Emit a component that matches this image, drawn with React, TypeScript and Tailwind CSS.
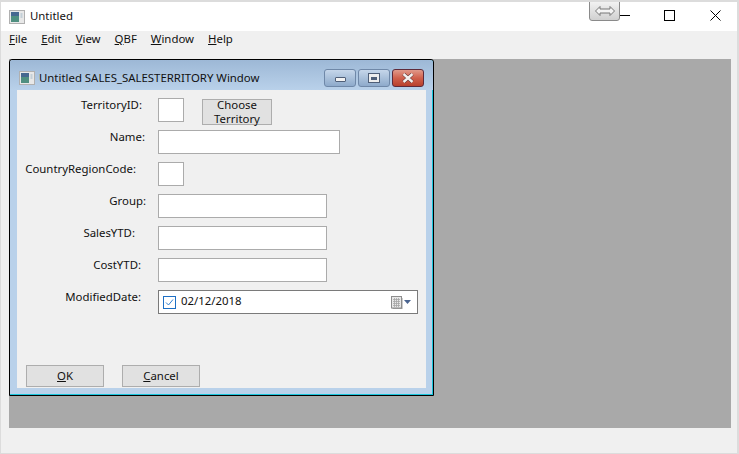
import React from "react";

function AppIcon({ className }: { className?: string }) {
    return (
        <svg className={className} width="16" height="14" viewBox="0 0 16 14">
            <rect x="0.5" y="0.5" width="15" height="13" fill="#e8e8e8" stroke="#b0b0b0" />
            <rect x="2" y="2" width="8" height="10" fill="#4f8f80" />
            <rect x="2" y="2" width="8" height="4" fill="#46688f" />
            <rect x="11.5" y="3" width="2" height="5" fill="#c4d0d8" />
        </svg>
    );
}

const fields = [
    { label: "Name:", pr: "pr-[13px]", w: "w-[182px]" },
    { label: "CountryRegionCode:", pr: "pr-[22px]", w: "w-[26px]" },
    { label: "Group:", pr: "pr-[12px]", w: "w-[169px]" },
    { label: "SalesYTD:", pr: "pr-[23px]", w: "w-[169px]" },
    { label: "CostYTD:", pr: "pr-[17px]", w: "w-[169px]" }
];

function Label({ text, pr }: { text: string; pr: string }) {
    return (
        <div className={`w-[141px] shrink-0 whitespace-nowrap text-right leading-[13px] ${pr}`}>
            {text}
        </div>
    );
}

function CaptionButton({ children, red }: { children: React.ReactNode; red?: boolean }) {
    return (
        <div
            className={
                red
                    ? "flex h-[18px] w-[32px] items-center justify-center rounded-[3px] border border-[#5e2a3a] bg-gradient-to-b from-[#e0998a] via-[#d0604c] to-[#b8402c]"
                    : "flex h-[18px] w-[32px] items-center justify-center rounded-[3px] border border-[#6f88a8] bg-gradient-to-b from-[#c5d6ea] via-[#a9c0da] to-[#8eaacb]"
            }>
            {children}
        </div>
    );
}

export default function App() {
    return (
        <div className="flex h-[454px] w-[739px] flex-col overflow-hidden border-t-2 border-r-2 border-b border-l border-[#dcdcdc] bg-[#f0f0f0] font-['Noto_Sans',sans-serif] text-[11.4px] text-[#111]">
            {/* main title bar */}
            <div className="relative flex h-[29px] shrink-0 items-center bg-white">
                <AppIcon className="ml-[8px] mr-[5px]" />
                <span className="pb-[2px]">Untitled</span>
                <div className="absolute left-[588px] top-[-2px] flex h-[21px] w-[31px] items-center justify-center rounded-b-[3px] border border-[#8a8a8a] bg-gradient-to-b from-[#f4f4f4] to-[#d0d0d0]">
                    <svg width="20" height="10" viewBox="0 0 20 10" fill="#f4f4f4" stroke="#777">
                        <path d="M0.5 5 L5 0.5 V3 H15 V0.5 L19.5 5 L15 9.5 V7 H5 V9.5 Z" />
                    </svg>
                </div>
                <svg className="absolute left-[619px] top-[13px]" width="10" height="2" viewBox="0 0 10 2">
                    <path d="M0 0.5 H10" stroke="#000" />
                </svg>
                <svg className="absolute left-[663px] top-[8px]" width="11" height="11" viewBox="0 0 11 11" fill="none">
                    <rect x="0.5" y="0.5" width="10" height="10" stroke="#000" />
                </svg>
                <svg className="absolute left-[709px] top-[8px]" width="11" height="11" viewBox="0 0 11 11" fill="none">
                    <path d="M0.5 0.5 L10.5 10.5 M10.5 0.5 L0.5 10.5" stroke="#000" />
                </svg>
            </div>

            {/* menu bar */}
            <div className="flex h-[28px] shrink-0 items-start gap-[14px] pl-[8px] leading-[16px]">
                <span><u>F</u>ile</span>
                <span><u>E</u>dit</span>
                <span><u>V</u>iew</span>
                <span><u>Q</u>BF</span>
                <span><u>W</u>indow</span>
                <span><u>H</u>elp</span>
            </div>

            {/* mdi area */}
            <div className="ml-[8px] h-[369px] w-[722px] shrink-0 bg-[#a9a9a9]">
                <div className="flex h-[337px] w-[425px] flex-col rounded-tl-[3px] rounded-tr-[3px] border border-black bg-[#b9d1ea] shadow-[inset_0_-1px_0_#19c5dc,inset_-1px_0_0_#19c5dc]">
                    {/* child window caption */}
                    <div className="flex h-[30px] shrink-0 items-center rounded-t-[3px] bg-gradient-to-b from-[#9db8d6] to-[#b9d1ea] pl-[9px] pr-[9px] pt-[6px]">
                        <AppIcon className="mr-[4px]" />
                        <span className="flex-1 whitespace-nowrap">Untitled SALES_SALESTERRITORY Window</span>
                        <div className="flex gap-[2px]">
                            <CaptionButton>
                                <div className="mt-[2px] h-[5px] w-[11px] rounded-[1px] border border-[#4f5f78] bg-[#f2f2f2]" />
                            </CaptionButton>
                            <CaptionButton>
                                <div className="flex h-[10px] w-[12px] items-center justify-center border border-[#4f5f78] bg-[#eeeeee]">
                                    <div className="h-[3px] w-[6px] bg-[#4f5f78]" />
                                </div>
                            </CaptionButton>
                            <CaptionButton red>
                                <svg width="12" height="10" viewBox="0 0 12 10">
                                    <path d="M1.5 1 L10.5 9 M10.5 1 L1.5 9" stroke="#5a3030" strokeWidth="3.6" />
                                    <path d="M1.5 1 L10.5 9 M10.5 1 L1.5 9" stroke="#f4f0ee" strokeWidth="2.4" />
                                </svg>
                            </CaptionButton>
                        </div>
                    </div>

                    {/* form */}
                    <div className="ml-[7px] mr-[7px] flex h-[298px] flex-col bg-[#f0f0f0] pt-[8px]">
                        <div className="flex h-[24px] items-start">
                            <Label text="TerritoryID:" pr="pr-[16px]" />
                            <div className="h-[24px] w-[26px] border border-[#ababab] bg-white" />
                            <button className="ml-[18px] mt-[1px] h-[26px] w-[70px] border border-[#adadad] bg-[#e1e1e1] text-center leading-[14px]">
                                <span className="block -translate-y-[2px]">Choose Territory</span>
                            </button>
                        </div>
                        {fields.map((f) => (
                            <div key={f.label} className="mt-[8px] flex h-[24px] items-start">
                                <Label text={f.label} pr={f.pr} />
                                <div className={`h-[24px] border border-[#ababab] bg-white ${f.w}`} />
                            </div>
                        ))}
                        <div className="mt-[8px] flex h-[24px] items-start">
                            <Label text="ModifiedDate:" pr="pr-[17px]" />
                            <div className="flex h-[24px] w-[260px] items-center border border-[#7a7a7a] bg-white pl-[4px] pr-[6px]">
                                <svg width="13" height="13" viewBox="0 0 13 13" fill="none">
                                    <rect x="0.5" y="0.5" width="12" height="12" stroke="#1d6fc4" />
                                    <path d="M3 6.5 L5.5 9 L10 3.5" stroke="#2f7fd0" />
                                </svg>
                                <span className="ml-[5px] flex-1 pb-[2px]">02/12/2018</span>
                                <svg width="20" height="13" viewBox="0 0 20 13">
                                    <rect x="1.5" y="2" width="10" height="11" fill="#9a9a9a" />
                                    <rect x="0.5" y="0.5" width="10" height="11.5" fill="#e8e8e8" stroke="#8d8d8d" />
                                    <path d="M2 3.5 H9 M2 5.5 H9 M2 7.5 H9 M2 9.5 H9 M3.5 2 V11 M5.5 2 V11 M7.5 2 V11" stroke="#a4a4a4" strokeWidth="0.8" />
                                    <path d="M13 4 H20 L16.5 8 Z" fill="#4a6490" />
                                </svg>
                            </div>
                        </div>
                        <div className="mt-auto flex gap-[18px] pb-[1px] pl-[9px]">
                            <button className="h-[22px] w-[78px] border border-[#adadad] bg-[#e1e1e1]">
                                <u>O</u>K
                            </button>
                            <button className="h-[22px] w-[78px] border border-[#adadad] bg-[#e1e1e1]">
                                <u>C</u>ancel
                            </button>
                        </div>
                    </div>
                </div>
            </div>
        </div>
    );
}
